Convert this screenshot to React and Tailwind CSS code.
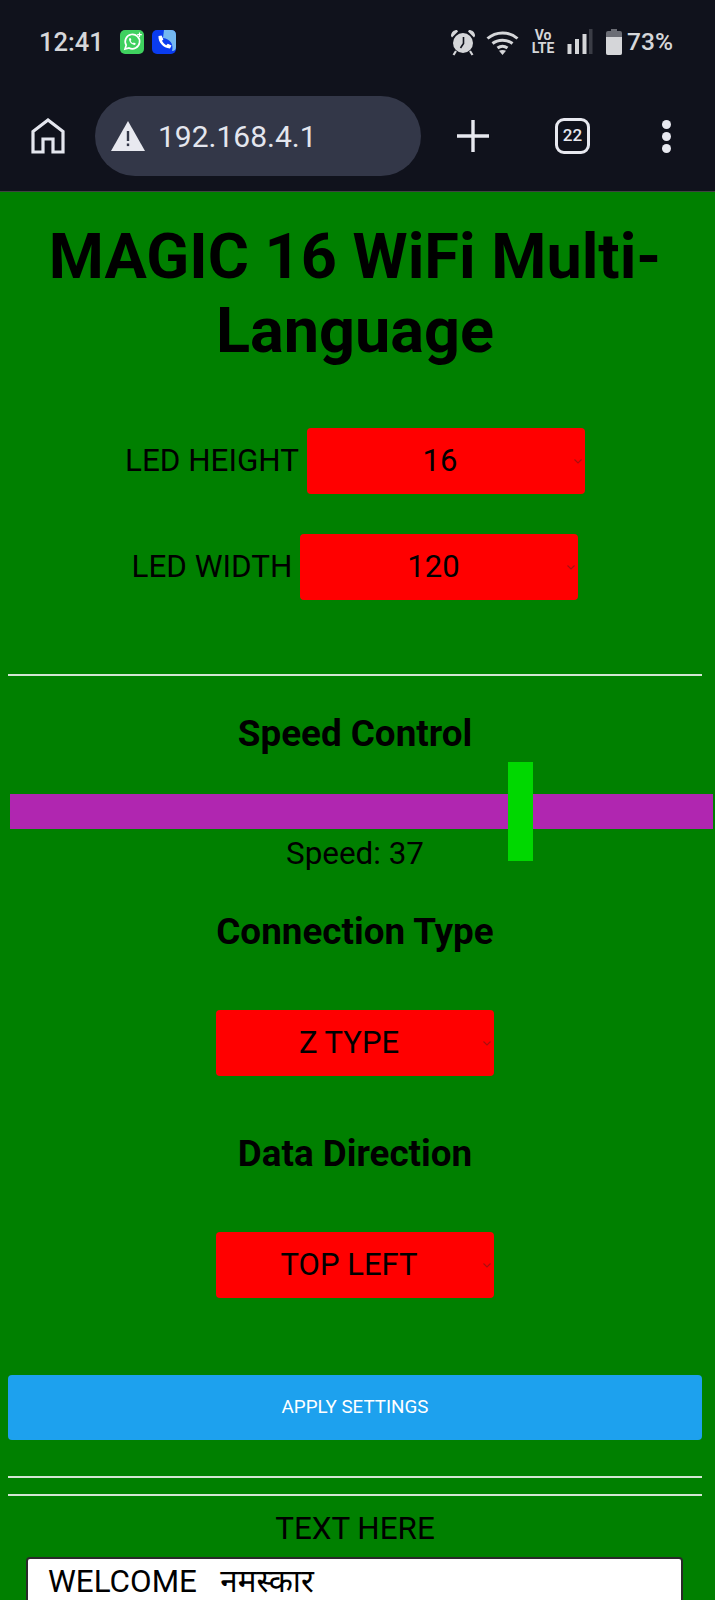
import React from "react";

const ROBOTO = { fontFamily: 'Roboto, "Noto Sans", sans-serif' };

function AlarmIcon() {
  return (
    <svg width="26" height="27" viewBox="0 0 26 27" fill="#d5d6d9">
      <path d="M1 7 C1 3 4 1 7 1 L8 2.5 L2 8.5 Z" />
      <path d="M25 7 C25 3 22 1 19 1 L18 2.5 L24 8.5 Z" />
      <circle cx="13" cy="14" r="10" />
      <path d="M6 22 L3.5 26 M20 22 L22.5 26" stroke="#d5d6d9" strokeWidth="2.2" />
      <path d="M13.5 8 V14.5 L10.5 19" fill="none" stroke="#10121c" strokeWidth="1.6" />
    </svg>
  );
}

function WifiIcon() {
  return (
    <svg width="33" height="25" viewBox="0 0 33 25" fill="none" stroke="#d5d6d9" strokeWidth="3">
      <path d="M1.5 8.5 C10 1 23 1 31.5 8.5" />
      <path d="M6.5 13.5 C12 9 21 9 26.5 13.5" />
      <path d="M11.5 18 C14.5 15.8 18.5 15.8 21.5 18" />
      <path d="M16.5 25 L13 20.8 C15 19.6 18 19.6 20 20.8 Z" fill="#d5d6d9" stroke="none" />
    </svg>
  );
}

function SignalIcon() {
  return (
    <svg width="26" height="26" viewBox="0 0 26 26">
      <rect x="0.5" y="15" width="4" height="10" fill="#d5d6d9" />
      <rect x="8" y="10" width="4" height="15" fill="#d5d6d9" />
      <rect x="15.5" y="5" width="4" height="20" fill="#d5d6d9" />
      <rect x="22" y="0" width="3.5" height="25" fill="#3a3c45" />
    </svg>
  );
}

function BatteryIcon() {
  return (
    <svg width="16" height="26" viewBox="0 0 16 26">
      <path d="M5 0 H11 V2 H14 Q16 2 16 4 V24 Q16 26 14 26 H2 Q0 26 0 24 V4 Q0 2 2 2 H5 Z" fill="#6b6d75" />
      <path d="M0 8 H16 V24 Q16 26 14 26 H2 Q0 26 0 24 Z" fill="#d5d6d9" />
    </svg>
  );
}

function WhatsAppBadge() {
  return (
    <svg width="24" height="24" viewBox="0 0 24 24">
      <rect width="24" height="24" rx="5" fill="#3fd15f" />
      <path d="M5 19 L6.2 15.2 A7.2 7.2 0 1 1 9 17.9 Z" fill="none" stroke="#ffffff" strokeWidth="1.7" />
      <path d="M9 8.5 C9 12 11.5 14.6 15 15 L15.8 13.4 L13.8 12.4 L13 13.2 C11.8 12.7 11 11.8 10.6 10.7 L11.4 9.9 L10.5 8 Z" fill="#ffffff" />
      <path d="M19.5 2.5 V7 M17.2 4.7 H21.8" stroke="#ffffff" strokeWidth="1.2" />
    </svg>
  );
}

function PhoneBadge() {
  return (
    <svg width="24" height="24" viewBox="0 0 24 24">
      <rect width="24" height="24" rx="5" fill="#0a3cf0" />
      <path d="M12 0 H19 Q24 0 24 5 V17 Q24 21 20 21 C22 14 18 9 11 8 Z" fill="#74b8f0" />
      <path d="M6.5 6 C6 12 11 18 18 18.5 L19.5 15.5 L15.8 13.8 L14.2 15.2 C12.4 14.2 10.8 12.6 10 10.8 L11.4 9.4 L9.6 5.5 Z" fill="#ffffff" />
    </svg>
  );
}

function StatusBar() {
  return (
    <div className="flex h-[84px] items-center justify-between pl-[39px] pr-[42px]">
      <div className="flex items-center">
        <span className="w-[81px] text-[25.5px] font-medium text-[#d5d6d9]">12:41</span>
        <WhatsAppBadge />
        <span className="ml-[8px] flex"><PhoneBadge /></span>
      </div>
      <div className="flex items-center">
        <AlarmIcon />
        <span className="ml-[10px] flex"><WifiIcon /></span>
        <span className="ml-[12px] flex w-[24px] flex-col items-center text-[14px] leading-[13px] font-bold text-[#d5d6d9]">
          <span>Vo</span>
          <span>LTE</span>
        </span>
        <span className="ml-[12px] flex"><SignalIcon /></span>
        <span className="ml-[13px] flex"><BatteryIcon /></span>
        <span className="ml-[5px] text-[24.5px] font-medium text-[#d5d6d9]">73%</span>
      </div>
    </div>
  );
}

function Toolbar() {
  return (
    <div className="flex h-[107px] items-start pt-[12px]">
      <div className="flex h-[80px] w-[95px] items-center justify-center pl-[1px]">
        <svg width="34" height="36" viewBox="0 0 34 36" fill="none" stroke="#e4e6ee" strokeWidth="3.2">
          <path d="M2 34 V13.5 L17 2 L32 13.5 V34 H22 V21 H12 V34 Z" strokeLinejoin="miter" />
        </svg>
      </div>
      <div className="flex h-[80px] w-[326px] items-center rounded-[40px] bg-[#333748] pl-[16px]">
        <svg width="34" height="30" viewBox="0 0 34 30">
          <path d="M17 0 L34 30 H0 Z" fill="#e8e9f0" />
          <rect x="15.8" y="10" width="2.4" height="10" fill="#333748" />
          <rect x="15.8" y="22.5" width="2.4" height="2.6" fill="#333748" />
        </svg>
        <span className="ml-[13px] text-[30px] text-[#e4e6ee]">192.168.4.1</span>
      </div>
      <div className="flex h-[80px] w-[68px] items-center justify-end">
        <svg width="32" height="32" viewBox="0 0 32 32" stroke="#e8e9f0" strokeWidth="3.4">
          <path d="M16 0 V32 M0 16 H32" />
        </svg>
      </div>
      <div className="ml-[66px] mt-[22px] flex h-[36px] w-[35px] items-center justify-center rounded-[9px] border-[3.4px] border-[#e8e9f0] text-[17px] font-medium text-[#e8e9f0]">
        22
      </div>
      <div className="ml-[72px] mt-[24px] flex flex-col gap-[3px]">
        <span className="h-[9px] w-[9px] rounded-full bg-[#e8e9f0]" />
        <span className="h-[9px] w-[9px] rounded-full bg-[#e8e9f0]" />
        <span className="h-[9px] w-[9px] rounded-full bg-[#e8e9f0]" />
      </div>
    </div>
  );
}

function Select({ className = "", options }) {
  return (
    <div className={`relative h-[66px] w-[278px] shrink-0 ${className}`}>
      <select
        defaultValue={options[0]}
        className="h-full w-full appearance-none rounded-[4px] border-0 bg-[#ff0000] pr-[12px] text-center text-[31px] text-black"
        style={ROBOTO}
      >
        {options.map((o) => (
          <option key={o}>{o}</option>
        ))}
      </select>
      <svg
        className="pointer-events-none absolute top-[31px] right-[3px]"
        width="8"
        height="5"
        viewBox="0 0 8 5"
        fill="none"
        stroke="#a80f0f"
        strokeWidth="1.1"
      >
        <path d="M0.5 0.5 L4 4 L7.5 0.5" />
      </svg>
    </div>
  );
}

export default function App() {
  return (
    <div className="min-h-[1600px] overflow-hidden bg-[#008000] text-black" style={ROBOTO}>
      <header className="h-[192px] border-b border-[#3d4440] bg-[#10121c]">
        <StatusBar />
        <Toolbar />
      </header>

      <main className="w-[710px] px-[8px] text-center">
        <h1 className="mt-[28px] text-[63px] leading-[74px] font-bold">MAGIC 16 WiFi Multi-Language</h1>

        <div className="mt-[60px] flex items-center justify-center gap-[8px]">
          <label className="text-[31.4px]">LED HEIGHT</label>
          <Select options={["16", "32", "48", "64"]} />
        </div>
        <div className="mt-[40px] flex items-center justify-center gap-[8px]">
          <label className="text-[31.4px]">LED WIDTH</label>
          <Select options={["120", "160", "240"]} />
        </div>

        <hr className="mt-[74px] border-0 border-t-2 border-[#d3e4d3]" />

        <h2 className="mt-[37px] text-[36.8px] leading-[41px] font-bold">Speed Control</h2>
        <input
          type="range"
          min="1"
          max="50"
          defaultValue="37"
          className="mt-[40px] ml-[2px] block h-[35px] w-[703px] max-w-none cursor-pointer appearance-none bg-[#b026b0] [&::-webkit-slider-thumb]:h-[99px] [&::-webkit-slider-thumb]:w-[25px] [&::-webkit-slider-thumb]:appearance-none [&::-webkit-slider-thumb]:bg-[#00d800]"
        />
        <p className="mt-[7px] text-[31.4px] leading-[35px]">Speed: 37</p>

        <h2 className="mt-[40px] text-[36.8px] leading-[41px] font-bold">Connection Type</h2>
        <Select className="mx-auto mt-[58px]" options={["Z TYPE", "S TYPE"]} />

        <h2 className="mt-[57px] text-[36.8px] leading-[41px] font-bold">Data Direction</h2>
        <Select className="mx-auto mt-[58px]" options={["TOP LEFT", "TOP RIGHT"]} />

        <button className="mt-[77px] block h-[65px] w-full rounded-[4px] bg-[#1da1ee] text-[18.8px] text-white">
          APPLY SETTINGS
        </button>

        <hr className="mt-[36px] border-0 border-t-2 border-[#d3e4d3]" />
        <hr className="mt-[16px] border-0 border-t-2 border-[#d3e4d3]" />

        <p className="mt-[15px] text-[31.4px] leading-[35px]">TEXT HERE</p>
        <input
          type="text"
          defaultValue="WELCOME   नमस्कार"
          className="mx-[18px] mt-[11px] block h-[80px] w-[657px] rounded-[4px] border-2 border-[#2a2a2a] bg-white pb-[35px] pl-[20px] text-[31.4px] text-black"
          style={{ fontFamily: 'Roboto, "Noto Sans", sans-serif', whiteSpace: "pre" }}
        />
      </main>
    </div>
  );
}
